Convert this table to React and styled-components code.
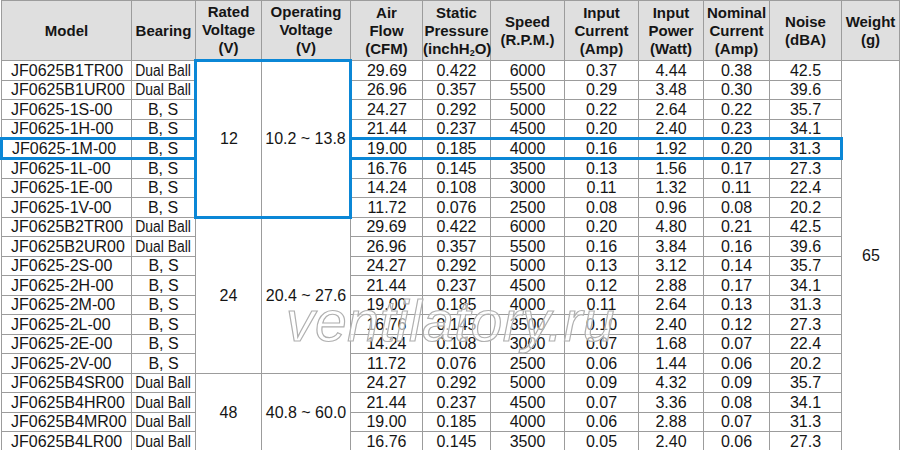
import React from "react";
import styled, { createGlobalStyle, css } from "styled-components";

const Global = createGlobalStyle`
  html, body { margin: 0; padding: 0; background: #fff; }
  body { font-family: "Liberation Sans", Arial, sans-serif; color: #151515; }
`;

const BLUE = "#0b87d6";
const GRID = "#9c9c9c";

const Wrap = styled.div`
  position: relative;
  width: 900px;
  height: 450px;
  overflow: hidden;
`;

const Table = styled.table`
  border-collapse: collapse;
  table-layout: fixed;
  width: 899px;
  font-family: "Liberation Sans", Arial, sans-serif;
`;

const HeadRow = styled.tr`
  height: 60px;
`;

const HeadCell = styled.th`
  background: #dfdfdf;
  border: 1px solid ${GRID};
  font-size: 15px;
  font-weight: bold;
  line-height: 18px;
  text-align: center;
  vertical-align: middle;
  padding: 0;
  color: #151515;
  white-space: nowrap;
`;

const Sub = styled.sub`
  font-size: 9px;
  vertical-align: -2px;
  line-height: 0;
`;

const Row = styled.tr`
  height: 19.5px;
`;

const Cell = styled.td`
  border: 1px solid ${GRID};
  font-size: 16px;
  line-height: 17px;
  padding: 0;
  padding-left: ${(p) => (p.$left ? "9px" : "0")};
  text-align: ${(p) => (p.$left ? "left" : "center")};
  vertical-align: middle;
  white-space: nowrap;
  overflow: visible;
  ${(p) => p.$hlTop && css`border-top: 3px solid ${BLUE};`}
  ${(p) => p.$hlBottom && css`border-bottom: 3px solid ${BLUE};`}
  ${(p) => p.$hlLeft && css`border-left: 3px solid ${BLUE};`}
  ${(p) => p.$hlRight && css`border-right: 3px solid ${BLUE};`}
`;

const Squeeze = styled.span`
  display: inline-block;
  transform: scaleX(0.87);
  transform-origin: center;
  margin: 0 -4px;
`;

const Watermark = styled.div`
  position: absolute;
  left: 286px;
  top: 291px;
  font-family: "Liberation Sans", Arial, sans-serif;
  font-style: italic;
  font-size: 57px;
  line-height: 60px;
  color: rgba(255, 255, 255, 0.6);
  -webkit-text-stroke: 1.2px #b0b0b0;
  letter-spacing: 0.5px;
  pointer-events: none;
  white-space: nowrap;
`;

const widths = [130, 64, 66, 89, 72, 68, 74, 74, 65, 66, 72, 58];

const rows = [
  ["JF0625B1TR00", "Dual Ball", "29.69", "0.422", "6000", "0.37", "4.44", "0.38", "42.5"],
  ["JF0625B1UR00", "Dual Ball", "26.96", "0.357", "5500", "0.29", "3.48", "0.30", "39.6"],
  ["JF0625-1S-00", "B, S", "24.27", "0.292", "5000", "0.22", "2.64", "0.22", "35.7"],
  ["JF0625-1H-00", "B, S", "21.44", "0.237", "4500", "0.20", "2.40", "0.23", "34.1"],
  ["JF0625-1M-00", "B, S", "19.00", "0.185", "4000", "0.16", "1.92", "0.20", "31.3"],
  ["JF0625-1L-00", "B, S", "16.76", "0.145", "3500", "0.13", "1.56", "0.17", "27.3"],
  ["JF0625-1E-00", "B, S", "14.24", "0.108", "3000", "0.11", "1.32", "0.11", "22.4"],
  ["JF0625-1V-00", "B, S", "11.72", "0.076", "2500", "0.08", "0.96", "0.08", "20.2"],
  ["JF0625B2TR00", "Dual Ball", "29.69", "0.422", "6000", "0.20", "4.80", "0.21", "42.5"],
  ["JF0625B2UR00", "Dual Ball", "26.96", "0.357", "5500", "0.16", "3.84", "0.16", "39.6"],
  ["JF0625-2S-00", "B, S", "24.27", "0.292", "5000", "0.13", "3.12", "0.14", "35.7"],
  ["JF0625-2H-00", "B, S", "21.44", "0.237", "4500", "0.12", "2.88", "0.17", "34.1"],
  ["JF0625-2M-00", "B, S", "19.00", "0.185", "4000", "0.11", "2.64", "0.13", "31.3"],
  ["JF0625-2L-00", "B, S", "16.76", "0.145", "3500", "0.10", "2.40", "0.12", "27.3"],
  ["JF0625-2E-00", "B, S", "14.24", "0.108", "3000", "0.07", "1.68", "0.07", "22.4"],
  ["JF0625-2V-00", "B, S", "11.72", "0.076", "2500", "0.06", "1.44", "0.06", "20.2"],
  ["JF0625B4SR00", "Dual Ball", "24.27", "0.292", "5000", "0.09", "4.32", "0.09", "35.7"],
  ["JF0625B4HR00", "Dual Ball", "21.44", "0.237", "4500", "0.07", "3.36", "0.08", "34.1"],
  ["JF0625B4MR00", "Dual Ball", "19.00", "0.185", "4000", "0.06", "2.88", "0.07", "31.3"],
  ["JF0625B4LR00", "Dual Ball", "16.76", "0.145", "3500", "0.05", "2.40", "0.06", "27.3"],
];

const groups = [
  { start: 0, span: 8, rated: "12", op: "10.2 ~ 13.8", boxed: true },
  { start: 8, span: 8, rated: "24", op: "20.4 ~ 27.6" },
  { start: 16, span: 4, rated: "48", op: "40.8 ~ 60.0" },
];

const HIGHLIGHT_ROW = 4;

export default function App() {
  return (
    <Wrap>
      <Global />
      <Table>
        <colgroup>
          {widths.map((w, i) => (
            <col key={i} style={{ width: w }} />
          ))}
        </colgroup>
        <thead>
          <HeadRow>
            <HeadCell>Model</HeadCell>
            <HeadCell>Bearing</HeadCell>
            <HeadCell>Rated<br />Voltage<br />(V)</HeadCell>
            <HeadCell>Operating<br />Voltage<br />(V)</HeadCell>
            <HeadCell>Air<br />Flow<br />(CFM)</HeadCell>
            <HeadCell>Static<br />Pressure<br />(inchH<Sub>2</Sub>O)</HeadCell>
            <HeadCell>Speed<br />(R.P.M.)</HeadCell>
            <HeadCell>Input<br />Current<br />(Amp)</HeadCell>
            <HeadCell>Input<br />Power<br />(Watt)</HeadCell>
            <HeadCell>Nominal<br />Current<br />(Amp)</HeadCell>
            <HeadCell>Noise<br />(dBA)</HeadCell>
            <HeadCell>Weight<br />(g)</HeadCell>
          </HeadRow>
        </thead>
        <tbody>
          {rows.map((r, i) => {
            const hl = i === HIGHLIGHT_ROW;
            const group = groups.find((g) => g.start === i);
            const [model, bearing, ...rest] = r;
            return (
              <Row key={model}>
                <Cell $left $hlTop={hl} $hlBottom={hl} $hlLeft={hl}>
                  {model}
                </Cell>
                <Cell $hlTop={hl} $hlBottom={hl}>
                  {bearing === "Dual Ball" ? <Squeeze>{bearing}</Squeeze> : bearing}
                </Cell>
                {group && (
                  <>
                    <Cell
                      rowSpan={group.span}
                      $hlTop={group.boxed}
                      $hlBottom={group.boxed}
                      $hlLeft={group.boxed}
                    >
                      {group.rated}
                    </Cell>
                    <Cell
                      rowSpan={group.span}
                      $hlTop={group.boxed}
                      $hlBottom={group.boxed}
                      $hlRight={group.boxed}
                    >
                      {group.op}
                    </Cell>
                  </>
                )}
                {rest.map((v, j) => (
                  <Cell
                    key={j}
                    $hlTop={hl}
                    $hlBottom={hl}
                    $hlLeft={hl && j === 0}
                    $hlRight={hl && j === rest.length - 1}
                  >
                    {v}
                  </Cell>
                ))}
                {i === 0 && <Cell rowSpan={rows.length}>65</Cell>}
              </Row>
            );
          })}
        </tbody>
      </Table>
      <Watermark aria-hidden="true">ventilatory.ru</Watermark>
    </Wrap>
  );
}
